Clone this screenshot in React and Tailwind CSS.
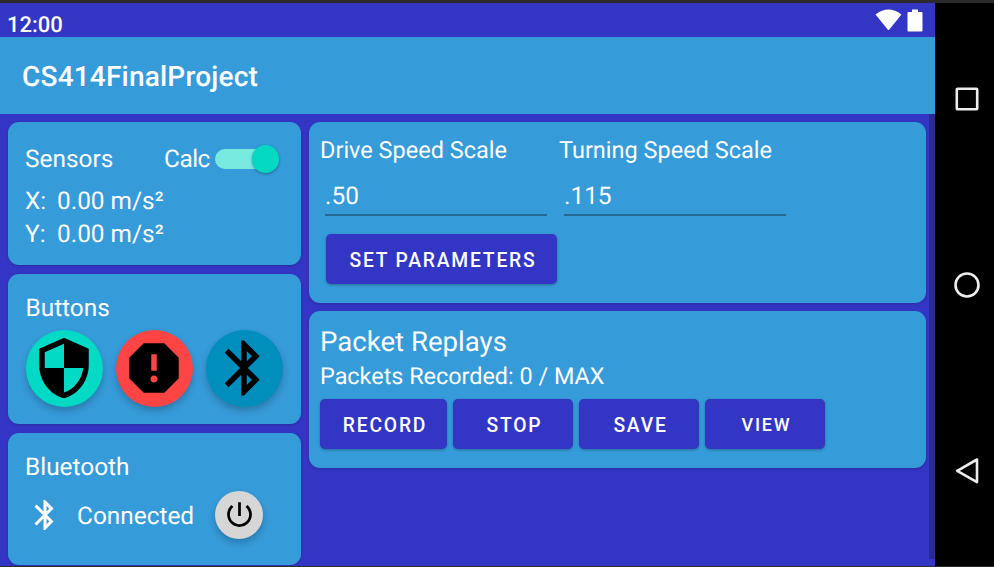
const ICONS = {
  shield:
    'M12 1L3 5v6c0 5.55 3.84 10.74 9 12 5.16-1.26 9-6.45 9-12V5l-9-4zm0 10.99h7c-.53 4.12-3.28 7.79-7 8.94V12H5V6.3l7-3.11v8.8z',
  report:
    'M15.73 3H8.27L3 8.27v7.46L8.27 21h7.46L21 15.73V8.27L15.73 3zM12 17.3c-.72 0-1.3-.58-1.3-1.3s.58-1.3 1.3-1.3 1.3.58 1.3 1.3-.58 1.3-1.3 1.3zm1-4.3h-2V7h2v6z',
  bluetooth:
    'M17.71 7.71L12 2h-1v7.59L6.41 5 5 6.41 10.59 12 5 17.59 6.41 19 11 14.41V22h1l5.71-5.71-4.3-4.29 4.3-4.29zM13 5.83l1.88 1.88L13 9.59V5.83zm1.88 10.46L13 18.17v-3.76l1.88 1.88z',
  power:
    'M13 3h-2v10h2V3zm4.83 2.17l-1.42 1.42C17.99 7.86 19 9.81 19 12c0 3.87-3.13 7-7 7s-7-3.13-7-7c0-2.19 1.01-4.14 2.58-5.42L6.17 5.17C4.23 6.82 3 9.26 3 12c0 4.97 4.03 9 9 9s9-4.03 9-9c0-2.74-1.23-5.18-3.17-6.83z',
};

function Icon({ name, className }) {
  return (
    <svg viewBox="0 0 24 24" fill="currentColor" className={className}>
      <path d={ICONS[name]} />
    </svg>
  );
}

function Card({ className, children }) {
  return (
    <section className={`rounded-[11px] bg-[#369bd9] shadow-[0_1px_3px_rgba(0,0,0,0.2)] ${className}`}>
      {children}
    </section>
  );
}

function RoundButton({ label, className, children }) {
  return (
    <button
      aria-label={label}
      className={`flex shrink-0 items-center justify-center rounded-full text-black shadow-[0_4px_7px_rgba(0,0,0,0.22)] ${className}`}
    >
      {children}
    </button>
  );
}

function Button({ className, children }) {
  return (
    <button
      className={`h-[50px] rounded-[5px] bg-[#3336c5] pl-[3px] font-medium tracking-[1.8px] shadow-[0_1px_3px_rgba(0,0,0,0.3)] ${className}`}
    >
      {children}
    </button>
  );
}

function Field({ label, value }) {
  return (
    <div className="w-[239px]">
      <div className="h-[30px] text-[23.500px] leading-[30px]">{label}</div>
      <div className="ml-[5px] mt-4 flex h-[35px] w-[222px] border-b-2 border-[#246893] text-[24.400px] leading-[30px]">
        {value}
      </div>
    </div>
  );
}

function StatusBar() {
  return (
    <div className="flex h-[34px] justify-between bg-[#3336c5] pl-[7px] pr-3">
      <span className="mt-[10px] h-[24px] text-[22px] font-medium leading-[25px]">12:00</span>
      <div className="flex gap-[5px] pt-[6px]">
        <svg viewBox="0 0 27 22" className="h-[22px] w-[27px]" fill="#fff">
          <path d="M.5 5.500Q13.500-1.500 26.500 5.500L14.300 20.500Q13.500 21.500 12.700 20.500Z" />
          <path d="M.5 5.500Q13.500-4.500 26.500 5.500Z" />
        </svg>
        <svg viewBox="0 0 16 23" className="h-[23px] w-4" fill="#fff">
          <path d="M5 .5h6V3h3.500q1 0 1 1v17.500q0 1-1 1h-13q-1 0-1-1V4q0-1 1-1H5z" />
        </svg>
      </div>
    </div>
  );
}

function NavigationBar() {
  return (
    <nav className="flex w-[59px] flex-col items-center bg-black pl-[5px] pt-[83px]">
      <svg viewBox="0 0 26 26" className="h-[26px] w-[26px]" fill="none" stroke="#ececec" strokeWidth="2.600">
        <rect x="2.800" y="2.800" width="20.400" height="20.400" rx=".8" />
      </svg>
      <svg viewBox="0 0 28 28" className="mt-[159px] h-[28px] w-[28px]" fill="none" stroke="#ececec" strokeWidth="2.600">
        <circle cx="14" cy="14" r="11.500" />
      </svg>
      <svg viewBox="0 0 26 28" className="mt-[158px] h-[28px] w-[26px]" fill="none" stroke="#ececec" strokeWidth="2.600" strokeLinejoin="round">
        <path d="M23 2.500v22.600L3.200 13.800z" />
      </svg>
    </nav>
  );
}

export default function App() {
  return (
    <div className="flex h-[567px] w-[994px] flex-col overflow-hidden border-b border-t-[3px] border-b-[#2d2d2d] border-t-[#2b2b2b] bg-black font-[Roboto,sans-serif] text-white [text-rendering:geometricPrecision]">
      <div className="flex min-h-0 flex-1">
        <div className="flex w-[935px] flex-col bg-[#3336c5]">
          <StatusBar />
          <header className="flex h-[76.500px] shrink-0 items-center bg-[#369bd9] pl-[22px] pt-[3px] text-[28px] font-medium tracking-[0.2px]">
            CS414FinalProject
          </header>
          <main className="flex min-h-0 flex-1 pl-2">
            <div className="flex w-[292.500px] flex-col gap-[8.500px] pt-[8.500px]">
              <Card className="h-[143px] pl-[17px] pt-[22px] text-[24.400px]">
                <div className="flex h-[30px] items-center">
                  <span className="w-[139px]">Sensors</span>
                  <span className="w-[51px] tracking-[-0.5px]">Calc</span>
                  <span className="flex h-5 w-[62.500px] items-center justify-end rounded-full bg-[#79eae0]">
                    <span className="mr-[-1.500px] h-[27.500px] w-[27.500px] rounded-full bg-[#03d8c3] shadow-[0_1px_3px_rgba(0,0,0,0.35)]" />
                  </span>
                </div>
                <div className="mt-[11px] flex h-[33px] items-center"><span className="w-8">X:</span>0.00 m/s²</div>
                <div className="flex h-[33px] items-center"><span className="w-8">Y:</span>0.00 m/s²</div>
              </Card>
              <Card className="h-[150.500px] pl-[17.500px] pt-[19px]">
                <div className="h-[30px] text-[24.400px] leading-[30px]">Buttons</div>
                <div className="mt-[7px] flex gap-[13px]">
                  <RoundButton label="Shield" className="h-[77px] w-[77px] bg-[#03dac5]">
                    <Icon name="shield" className="h-[66px] w-[66px]" />
                  </RoundButton>
                  <RoundButton label="Stop" className="h-[77px] w-[77px] bg-[#ff4444]">
                    <Icon name="report" className="h-[66px] w-[66px]" />
                  </RoundButton>
                  <RoundButton label="Connect" className="h-[77px] w-[77px] bg-[#008ebd]">
                    <Icon name="bluetooth" className="h-[66px] w-[66px]" />
                  </RoundButton>
                </div>
              </Card>
              <Card className="h-[132px] pl-[17px] pt-[19px] text-[24.400px]">
                <div className="h-[30px] leading-[30px]">Bluetooth</div>
                <div className="mt-[9px] flex items-center">
                  <Icon name="bluetooth" className="ml-[2px] h-9 w-9" />
                  <span className="ml-[14px] w-[138px] pt-1">Connected</span>
                  <RoundButton label="Power" className="h-12 w-12 bg-[#d6d6d6]">
                    <Icon name="power" className="h-[33px] w-[33px]" />
                  </RoundButton>
                </div>
              </Card>
            </div>
            <div className="ml-[8.500px] flex w-[617px] flex-col gap-[8.500px] pt-[8.500px]">
              <Card className="h-[180.500px] pl-[11px] pt-[13px]">
                <div className="flex">
                  <Field label="Drive Speed Scale" value=".50" />
                  <Field label="Turning Speed Scale" value=".115" />
                </div>
                <Button className="ml-[6px] mt-[18px] w-[231px] pt-1 text-[19.300px]">SET PARAMETERS</Button>
              </Card>
              <Card className="h-[157px] pl-[11px] pt-[13px]">
                <div className="h-9 text-[27.600px] leading-9">Packet Replays</div>
                <div className="h-8 text-[23.400px] leading-8">Packets Recorded: 0 / MAX</div>
                <div className="mt-[7px] flex gap-[6px]">
                  <Button className="w-[127px] pt-1 text-[19.300px]">RECORD</Button>
                  <Button className="w-[120px] pt-1 text-[19.300px]">STOP</Button>
                  <Button className="w-[120px] pt-1 text-[19.300px]">SAVE</Button>
                  <Button className="w-[120px] pt-[1px] text-[18px]">VIEW</Button>
                </div>
              </Card>
            </div>
            <div className="ml-[3px] h-[445px] w-[6px] bg-[#292b93]" />
          </main>
        </div>
        <NavigationBar />
      </div>
    </div>
  );
}
